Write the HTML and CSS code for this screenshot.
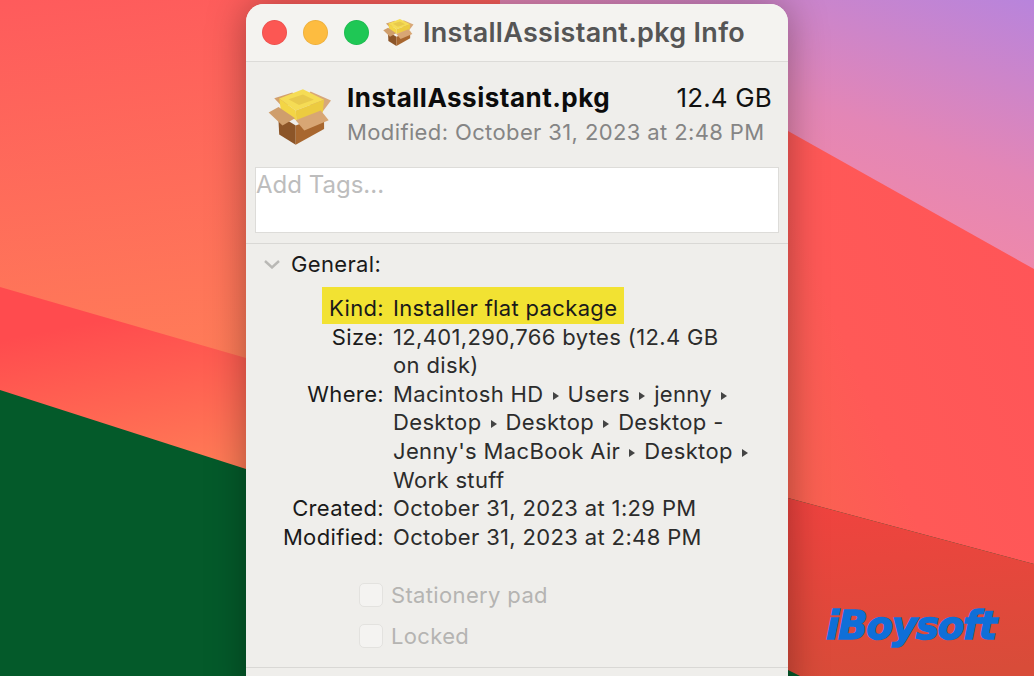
FILE: index.html
```html
<!DOCTYPE html>
<html lang="en">
<head>
    <meta charset="UTF-8">
    <title>InstallAssistant.pkg Info</title>
    <link rel="stylesheet" href="styles.css">
</head>
<body>
    <svg width="0" height="0" class="defs">
        <symbol id="pkg" viewBox="60 262 200 180">
            <polygon points="85,295 140,278 160,300 110,322" fill="#d3a06c"/>
            <polygon points="195,275 257,302 232,335 170,305" fill="#d8a878"/>
            <polygon points="97,345 150,378 150,436 100,405" fill="#8c5528"/>
            <polygon points="150,378 236,345 236,388 150,436" fill="#a8672f"/>
            <polygon points="100,296 172,268 236,300 150,332" fill="#f5dc55"/>
            <polygon points="100,296 150,332 152,362 106,338" fill="#f3d545"/>
            <polygon points="150,332 236,300 232,338 152,362" fill="#eccb40"/>
            <polygon points="128,298 172,284 205,300 160,316" fill="#e8c94c"/>
            <polygon points="68,338 98,322 148,356 110,378" fill="#cf9e6c"/>
            <polygon points="150,362 226,332 250,362 176,393" fill="#d8a674"/>
        </symbol>
    </svg>

    <svg class="wallpaper" width="1034" height="676" viewBox="0 0 1034 676">
        <defs>
            <linearGradient id="top" x1="0" y1="0" x2="0.15" y2="1">
                <stop offset="0" stop-color="#fe5b5c"/>
                <stop offset="1" stop-color="#ff7e58"/>
            </linearGradient>
            <linearGradient id="band" x1="0.3" y1="0.2" x2="0.5" y2="1">
                <stop offset="0" stop-color="#ff4b4e"/>
                <stop offset="1" stop-color="#ff7a56"/>
            </linearGradient>
            <linearGradient id="pink" x1="1" y1="0" x2="0.4" y2="0.9">
                <stop offset="0" stop-color="#b884dc"/>
                <stop offset="0.5" stop-color="#e386b6"/>
                <stop offset="1" stop-color="#f98a9f"/>
            </linearGradient>
            <linearGradient id="red" x1="1" y1="0.3" x2="0" y2="1">
                <stop offset="0" stop-color="#ff5558"/>
                <stop offset="0.6" stop-color="#ff5957"/>
                <stop offset="1" stop-color="#f8654f"/>
            </linearGradient>
            <linearGradient id="low" x1="0.4" y1="0" x2="0.5" y2="1">
                <stop offset="0" stop-color="#f0433f"/>
                <stop offset="1" stop-color="#d84c39"/>
            </linearGradient>
        </defs>
        <rect width="500" height="400" fill="url(#top)"/>
        <polygon points="0,287 246,358 246,480 0,400" fill="url(#band)"/>
        <polygon points="0,390 246,469 246,676 0,676" fill="#045a2a"/>
        <rect x="500" width="534" height="280" fill="url(#pink)"/>
        <polygon points="788,131 1034,269 1034,564 788,498" fill="url(#red)"/>
        <polygon points="788,498 1034,564 1034,676 788,676" fill="url(#low)"/>
        <polygon points="788,670 800,676 788,676" fill="#045a2a"/>
    </svg>

    <main class="window">
        <header class="titlebar">
            <span class="light red"></span>
            <span class="light yellow"></span>
            <span class="light green"></span>
            <svg class="title-icon"><use href="#pkg"/></svg>
            <span class="title">InstallAssistant.pkg Info</span>
        </header>

        <section class="summary">
            <svg class="big-icon"><use href="#pkg"/></svg>
            <div class="summary-text">
                <div class="summary-top">
                    <span class="file-name">InstallAssistant.pkg</span>
                    <span class="file-size">12.4 GB</span>
                </div>
                <div class="file-modified">Modified: October 31, 2023 at 2:48 PM</div>
            </div>
        </section>

        <div class="tags">Add Tags...</div>

        <section class="general">
            <div class="general-head">
                <svg class="chevron" width="18" height="10" viewBox="0 0 18 10"><path d="M2 2 L9 8.5 L16 2" fill="none" stroke="#b9b8b5" stroke-width="2.4"/></svg>
                <span>General:</span>
            </div>

            <div class="row highlight"><span class="label">Kind:</span><span class="value">Installer flat package</span></div>
            <div class="row"><span class="label">Size:</span><span class="value">12,401,290,766 bytes (12.4 GB<br>on disk)</span></div>
            <div class="row"><span class="label">Where:</span><span class="value">Macintosh HD <i class="sep"></i> Users <i class="sep"></i> jenny <i class="sep"></i><br>Desktop <i class="sep"></i> Desktop <i class="sep"></i> Desktop -<br>Jenny's MacBook Air <i class="sep"></i> Desktop <i class="sep"></i><br>Work stuff</span></div>
            <div class="row"><span class="label">Created:</span><span class="value">October 31, 2023 at 1:29 PM</span></div>
            <div class="row"><span class="label">Modified:</span><span class="value">October 31, 2023 at 2:48 PM</span></div>

            <div class="checks">
                <label class="check"><span class="box"></span>Stationery pad</label>
                <label class="check"><span class="box"></span>Locked</label>
            </div>
        </section>

        <div class="bottom-line"></div>
    </main>

    <div class="watermark">iBoysoft</div>
</body>
</html>
```

FILE: styles.css
```css
html, body {
    margin: 0;
    height: 676px;
    overflow: hidden;
}
body {
    font-family: Inter, "Noto Sans", sans-serif;
    position: relative;
    width: 1034px;
    background: #045a2a;
}
.defs {
    position: absolute;
}
.wallpaper {
    position: absolute;
    left: 0;
    top: 0;
}
.window {
    position: absolute;
    left: 246px;
    top: 4px;
    width: 542px;
    height: 700px;
    background: #efeeeb;
    border-radius: 18px 18px 0 0;
    box-shadow: 0 0 38px rgba(0, 0, 0, 0.34);
}
.titlebar {
    display: flex;
    align-items: center;
    height: 57px;
    padding-left: 16px;
    background: #f4f3f0;
    border-bottom: 1px solid #dcdbd8;
    border-radius: 18px 18px 0 0;
}
.light {
    width: 25px;
    height: 25px;
    border-radius: 50%;
    margin-right: 16px;
    box-sizing: border-box;
    border: 1px solid rgba(0, 0, 0, 0.06);
}
.red { background: #fc5753; }
.yellow { background: #fdbc40; }
.green { background: #1fc755; }
.title-icon {
    width: 32px;
    height: 29px;
    margin-left: -3px;
    margin-right: 9px;
}
.title {
    font-size: 27px;
    font-weight: 600;
    letter-spacing: 0.3px;
    color: #555;
    white-space: nowrap;
}
.summary {
    display: flex;
    height: 105px;
    padding: 0 16px 0 20px;
}
.big-icon {
    width: 66px;
    height: 60px;
    margin-top: 25px;
    margin-right: 15px;
}
.summary-text {
    flex: 1;
    padding-top: 20px;
}
.summary-top {
    display: flex;
    justify-content: space-between;
    align-items: baseline;
}
.file-name {
    font-size: 26px;
    font-weight: 700;
    letter-spacing: 0.5px;
    color: #0c0c0c;
}
.file-size {
    font-size: 26px;
    letter-spacing: 0.15px;
    color: #111;
}
.file-modified {
    margin-top: 6px;
    font-size: 22px;
    letter-spacing: 0.38px;
    color: #858585;
    white-space: nowrap;
}
.tags {
    height: 64px;
    margin: 0 9px;
    background: #fff;
    border: 1px solid #dddcd9;
    font-size: 24px;
    line-height: 34px;
    color: #bdbdbd;
}
.general {
    margin-top: 10px;
    border-top: 1px solid #d9d8d5;
    letter-spacing: 0.35px;
}
.general-head {
    display: flex;
    align-items: center;
    height: 40px;
    font-size: 22px;
    color: #1a1a1a;
}
.chevron {
    margin-left: 17px;
    margin-right: 10px;
}
.row {
    display: flex;
    font-size: 22px;
    line-height: 28.6px;
    color: #1a1a1a;
    white-space: nowrap;
}
.label {
    width: 138px;
    margin-right: 9px;
    text-align: right;
    flex: none;
}
.value {
    color: #2c2c2c;
}
.highlight {
    width: 302px;
    margin: 3px 0 -1.4px 76px;
    padding: 7px 0 1.4px;
    background: #f2e232;
}
.highlight .label {
    width: 62px;
}
.highlight .value {
    color: #1a1a1a;
}
.sep {
    display: inline-block;
    width: 0;
    height: 0;
    margin: 0 2.5px;
    vertical-align: 2px;
    border-left: 6px solid #444;
    border-top: 4px solid transparent;
    border-bottom: 4px solid transparent;
}
.checks {
    margin-top: 23px;
    padding-left: 113px;
}
.check {
    display: flex;
    align-items: center;
    height: 41px;
    font-size: 22px;
    color: #b5b4b2;
}
.box {
    width: 24px;
    height: 24px;
    margin-right: 8px;
    box-sizing: border-box;
    background: #f4f3f1;
    border: 1px solid #e3e2df;
    border-radius: 5px;
}
.bottom-line {
    position: absolute;
    left: 0;
    right: 0;
    top: 663px;
    border-top: 1px solid #d9d8d5;
}
.watermark {
    position: absolute;
    left: 826px;
    top: 603px;
    font-family: "DejaVu Sans", sans-serif;
    font-size: 39px;
    font-weight: 700;
    font-style: italic;
    letter-spacing: -1.4px;
    color: #0f6fd8;
    -webkit-text-stroke: 1.5px #0f6fd8;
}
```
